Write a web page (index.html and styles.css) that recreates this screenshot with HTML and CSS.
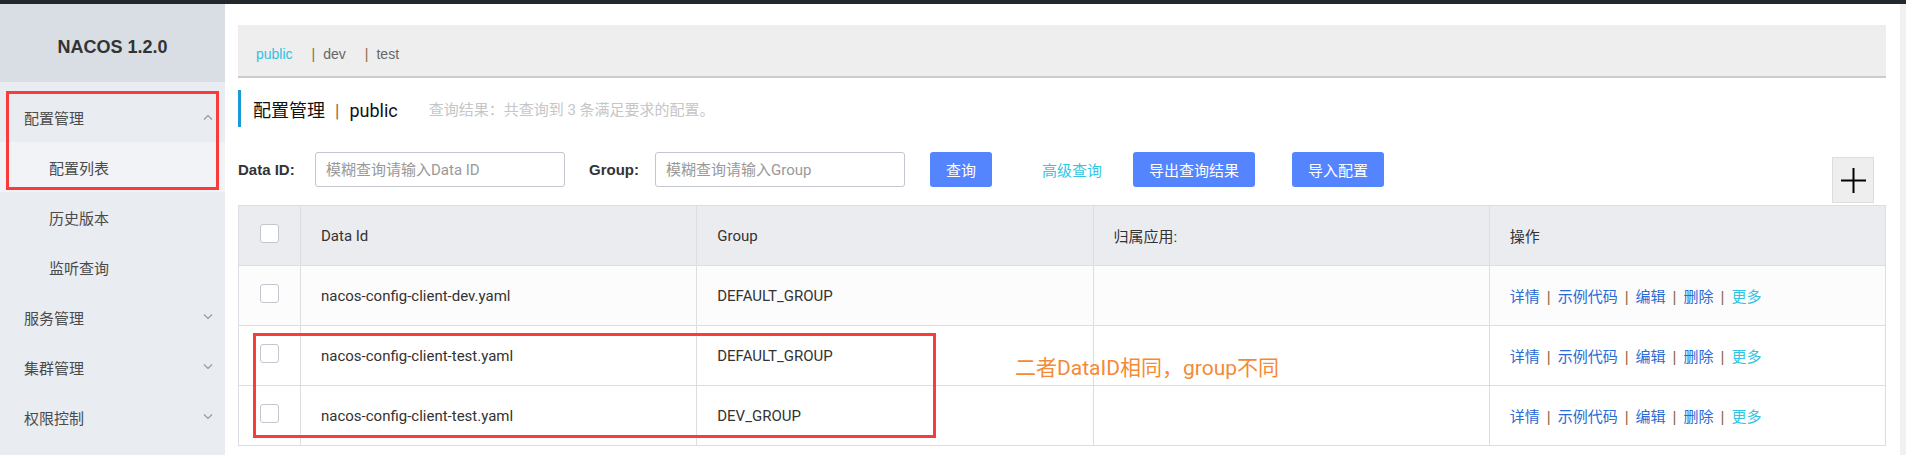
FILE: index.html
```html
<!DOCTYPE html>
<html lang="zh-CN">
<head>
<meta charset="utf-8">
<title>Nacos 配置列表</title>
<link rel="stylesheet" href="styles.css">
</head>
<body>
<div class="topbar"></div>
<div class="app">
  <aside class="sidebar">
    <div class="logo">NACOS 1.2.0</div>
    <nav class="menu">
      <div class="menu-item">
        <span>配置管理</span>
        <svg class="chev" viewBox="0 0 10 6"><polyline points="1,5.5 5,1.5 9,5.5"/></svg>
      </div>
      <div class="sub-item selected">配置列表</div>
      <div class="sub-item">历史版本</div>
      <div class="sub-item">监听查询</div>
      <div class="menu-item">
        <span>服务管理</span>
        <svg class="chev" viewBox="0 0 10 6"><polyline points="1,0.5 5,4.5 9,0.5"/></svg>
      </div>
      <div class="menu-item">
        <span>集群管理</span>
        <svg class="chev" viewBox="0 0 10 6"><polyline points="1,0.5 5,4.5 9,0.5"/></svg>
      </div>
      <div class="menu-item">
        <span>权限控制</span>
        <svg class="chev" viewBox="0 0 10 6"><polyline points="1,0.5 5,4.5 9,0.5"/></svg>
      </div>
    </nav>
    <div class="mark mark-menu"></div>
  </aside>

  <main class="main">
    <div class="ns-bar">
      <span class="ns active">public</span>
      <span class="ns"><span class="sep">|</span>dev</span>
      <span class="ns"><span class="sep">|</span>test</span>
    </div>

    <div class="page-title">
      <span class="title-text">配置管理<span class="title-sep">|</span>public</span>
      <span class="hint">查询结果：共查询到 3 条满足要求的配置。</span>
    </div>

    <div class="filter">
      <label class="f-label f-label-id">Data ID:</label>
      <input class="f-input" type="text" placeholder="模糊查询请输入Data ID">
      <label class="f-label f-label-group">Group:</label>
      <input class="f-input" type="text" placeholder="模糊查询请输入Group">
      <button class="btn btn-query">查询</button>
      <a class="adv">高级查询</a>
      <button class="btn btn-export">导出查询结果</button>
      <button class="btn btn-import">导入配置</button>
      <button class="add-btn" aria-label="新建配置">
        <svg viewBox="0 0 25 25" width="25" height="25"><path d="M12.5 0V25M0 12.5H25"/></svg>
      </button>
    </div>

    <div class="table-wrap">
      <table class="cfg-table">
        <colgroup>
          <col class="c-check">
          <col><col><col><col>
        </colgroup>
        <thead>
          <tr>
            <th class="cell-check"><span class="cb"></span></th>
            <th>Data Id</th>
            <th>Group</th>
            <th>归属应用:</th>
            <th>操作</th>
          </tr>
        </thead>
        <tbody>
          <tr class="row-alt">
            <td class="cell-check"><span class="cb"></span></td>
            <td>nacos-config-client-dev.yaml</td>
            <td>DEFAULT_GROUP</td>
            <td></td>
            <td class="ops"><a class="op">详情</a><span class="op-sep">|</span><a class="op">示例代码</a><span class="op-sep">|</span><a class="op">编辑</a><span class="op-sep">|</span><a class="op">删除</a><span class="op-sep">|</span><a class="op op-more">更多</a></td>
          </tr>
          <tr>
            <td class="cell-check"><span class="cb"></span></td>
            <td>nacos-config-client-test.yaml</td>
            <td>DEFAULT_GROUP</td>
            <td></td>
            <td class="ops"><a class="op">详情</a><span class="op-sep">|</span><a class="op">示例代码</a><span class="op-sep">|</span><a class="op">编辑</a><span class="op-sep">|</span><a class="op">删除</a><span class="op-sep">|</span><a class="op op-more">更多</a></td>
          </tr>
          <tr>
            <td class="cell-check"><span class="cb"></span></td>
            <td>nacos-config-client-test.yaml</td>
            <td>DEV_GROUP</td>
            <td></td>
            <td class="ops"><a class="op">详情</a><span class="op-sep">|</span><a class="op">示例代码</a><span class="op-sep">|</span><a class="op">编辑</a><span class="op-sep">|</span><a class="op">删除</a><span class="op-sep">|</span><a class="op op-more">更多</a></td>
          </tr>
        </tbody>
      </table>
      <div class="mark mark-rows"></div>
      <div class="note">二者DataID相同，group不同</div>
    </div>
  </main>

  <div class="scrollbar"></div>
</div>
</body>
</html>
```

FILE: styles.css
```css
* {
  box-sizing: border-box;
}

html,
body {
  margin: 0;
  padding: 0;
}

body {
  width: 1906px;
  height: 455px;
  overflow: hidden;
  font-family: Roboto, "Noto Sans CJK SC", sans-serif;
  font-size: 15px;
  color: #333;
  background: #fff;
}

.topbar {
  height: 4px;
  background: #23282d;
}

.app {
  display: flex;
  height: 451px;
}

/* ---------- sidebar ---------- */
.sidebar {
  position: relative;
  width: 225px;
  flex: none;
  background: #e9ecf1;
}

.logo {
  height: 78px;
  padding-top: 9px;
  display: flex;
  align-items: center;
  justify-content: center;
  background: #d9dde4;
  font-family: "Liberation Sans", Arial, sans-serif;
  font-weight: bold;
  font-size: 18px;
  color: #333;
}

.menu {
  padding-top: 10px;
}

.menu-item {
  height: 50px;
  display: flex;
  align-items: center;
  justify-content: space-between;
  padding: 0 12px 0 24px;
  color: #4a4a4a;
  font-family: "Noto Sans CJK SC", sans-serif;
}

.sub-item {
  height: 50px;
  display: flex;
  align-items: center;
  padding-left: 49px;
  color: #4a4a4a;
  font-family: "Noto Sans CJK SC", sans-serif;
}

.sub-item.selected {
  background: #f1f3f6;
}

.chev {
  width: 10px;
  height: 6px;
  fill: none;
  stroke: #999;
  stroke-width: 1.2;
}

/* red annotation frames */
.mark {
  position: absolute;
  border: 3px solid #fa3b3b;
  pointer-events: none;
}

.mark-menu {
  left: 6px;
  top: 87px;
  width: 213px;
  height: 99px;
}

/* ---------- main ---------- */
.main {
  flex: 1;
  min-width: 0;
  padding: 21px 14px 0 13px;
}

.scrollbar {
  width: 6px;
  flex: none;
  background: #f1f1f1;
}

.ns-bar {
  height: 53px;
  padding: 7px 0 0 18px;
  display: flex;
  align-items: center;
  background: #eeeeee;
  border-bottom: 2px solid #cccccc;
  font-family: "Liberation Sans", Arial, sans-serif;
  font-size: 14px;
  color: #666;
}

.ns {
  margin-right: 19px;
}

.ns.active {
  color: #33c0e2;
}

.sep {
  margin-right: 8px;
  color: #8b6a48;
}

.page-title {
  margin-top: 12px;
  height: 37px;
  display: flex;
  align-items: center;
  border-left: 3px solid #1a9bd7;
  padding-left: 12px;
}

.title-text {
  font-size: 18px;
  color: #111;
}

.title-sep {
  margin: 0 10px;
  color: #8b6a48;
}

.hint {
  margin-left: 31px;
  font-size: 15px;
  color: #c6c6c6;
}

/* ---------- filter row ---------- */
.filter {
  margin-top: 25px;
  height: 51px;
  display: flex;
  align-items: flex-start;
}

.f-label {
  line-height: 35px;
  font-family: "Liberation Sans", Arial, sans-serif;
  font-weight: bold;
  font-size: 15px;
  color: #333;
}

.f-label-id {
  width: 77px;
}

.f-label-group {
  width: 66px;
  margin-left: 24px;
}

.f-input {
  width: 250px;
  height: 35px;
  padding: 0 10px;
  border: 1px solid #c4c6cf;
  border-radius: 3px;
  background: #fff;
  font-family: Roboto, "Noto Sans CJK SC", sans-serif;
  font-size: 15px;
  color: #333;
  outline: none;
}

.f-input::placeholder {
  color: #999;
  opacity: 1;
}

.btn {
  height: 35px;
  padding: 0 16px;
  border: none;
  border-radius: 3px;
  background: #5584ff;
  color: #fff;
  font-family: "Noto Sans CJK SC", sans-serif;
  font-size: 15px;
  cursor: pointer;
}

.btn-query {
  margin-left: 25px;
}

.adv {
  margin-left: 50px;
  line-height: 35px;
  color: #33c6e2;
  font-family: "Noto Sans CJK SC", sans-serif;
  font-size: 15px;
}

.btn-export {
  margin-left: 31px;
}

.btn-import {
  margin-left: 37px;
}

.add-btn {
  width: 42px;
  height: 46px;
  margin: 5px 12px 0 auto;
  padding: 0;
  display: flex;
  align-items: center;
  justify-content: center;
  background: #eeeeee;
  border: 1px solid #dddddd;
}

.add-btn svg {
  stroke: #000;
  stroke-width: 2;
  fill: none;
}

/* ---------- table ---------- */
.table-wrap {
  position: relative;
  margin-top: 2px;
}

.cfg-table {
  width: 100%;
  table-layout: fixed;
  border-collapse: separate;
  border-spacing: 0;
  border-top: 1px solid #dcdee3;
  border-left: 1px solid #dcdee3;
}

.c-check {
  width: 62px;
}

.cfg-table tr {
  height: 60px;
}

.cfg-table th,
.cfg-table td {
  padding: 0 20px;
  border-right: 1px solid #dcdee3;
  border-bottom: 1px solid #dcdee3;
  text-align: left;
  vertical-align: middle;
  font-weight: normal;
  font-size: 15px;
  color: #333;
  white-space: nowrap;
}

.cfg-table th {
  background: #ebecf0;
}

.cfg-table .row-alt td {
  background: #fcfcfc;
}

.cfg-table .cell-check {
  padding: 0;
}

.cb {
  display: block;
  width: 19px;
  height: 19px;
  margin: -4px auto 0;
  border: 1px solid #c4c6cf;
  border-radius: 3px;
  background: #fff;
}

.op {
  color: #2a6bd5;
  font-family: "Noto Sans CJK SC", sans-serif;
}

.op-more {
  color: #33c3e4;
}

.op-sep {
  margin: 0 7px;
  color: #8b6a48;
  font-family: "Liberation Sans", Arial, sans-serif;
}

.mark-rows {
  left: 15px;
  top: 128px;
  width: 683px;
  height: 105px;
}

.note {
  position: absolute;
  left: 777px;
  top: 151px;
  line-height: 25px;
  font-size: 21px;
  color: #f48a35;
  white-space: nowrap;
}
```
